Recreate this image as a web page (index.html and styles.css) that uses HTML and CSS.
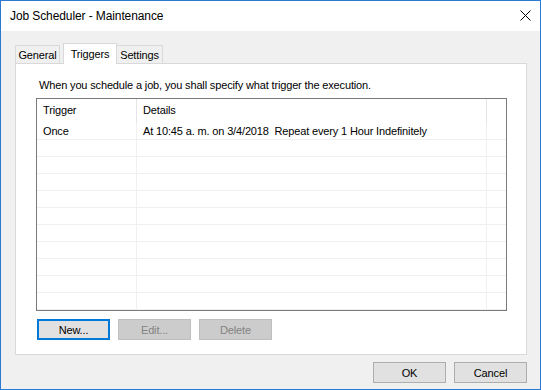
FILE: index.html
```html
<!DOCTYPE html>
<html lang="en">
<head>
  <meta charset="UTF-8" />
  <title>Job Scheduler - Maintenance</title>
  <link rel="stylesheet" href="styles.css">
</head>
<body>
  <div class="window">
    <div class="titlebar">
      <span class="title">Job Scheduler - Maintenance</span>
      <svg class="close" width="11" height="11" viewBox="0 0 11 11">
        <path d="M0.5 0.5 L10.5 10.5 M10.5 0.5 L0.5 10.5" stroke="#000" stroke-width="1" fill="none"/>
      </svg>
    </div>

    <div class="content">
      <div class="tabs">
        <div class="tab tab-general">General</div>
        <div class="tab tab-triggers active">Triggers</div>
        <div class="tab tab-settings">Settings</div>
      </div>

      <div class="panel">
        <div class="desc">When you schedule a job, you shall specify what trigger the execution.</div>

        <div class="list">
          <div class="list-head">
            <div class="hcell">Trigger</div>
            <div class="hcell">Details</div>
            <div class="hcell last"></div>
          </div>
          <div class="list-body" id="rows"></div>
        </div>

        <div class="list-buttons">
          <button class="btn focused">New...</button>
          <button class="btn" disabled>Edit...</button>
          <button class="btn" disabled>Delete</button>
        </div>
      </div>

      <div class="footer">
        <button class="btn">OK</button>
        <button class="btn">Cancel</button>
      </div>
    </div>
  </div>

  <script>
    const rows = [
      ["Once", "At 10:45 a. m. on 3/4/2018  Repeat every 1 Hour Indefinitely"]
    ];
    const body = document.getElementById("rows");
    for (let i = 0; i < 11; i++) {
      const r = rows[i] || ["", ""];
      const row = document.createElement("div");
      row.className = "row";
      [r[0], r[1], ""].forEach(txt => {
        const c = document.createElement("div");
        c.className = "cell";
        c.textContent = txt;
        row.appendChild(c);
      });
      body.appendChild(row);
    }
  </script>
</body>
</html>
```

FILE: styles.css
```css
* {
  box-sizing: border-box;
}

body {
  margin: 0;
  font-family: "Liberation Sans", Arial, sans-serif;
  font-size: 11px;
  letter-spacing: -0.15px;
  color: #000;
  background: #fff;
}

.window {
  width: 541px;
  height: 390px;
  border: 1px solid #2b79d0;
  background: #f0f0f0;
  display: flex;
  flex-direction: column;
}

.titlebar {
  height: 30px;
  background: #fff;
  display: flex;
  align-items: center;
  justify-content: space-between;
  padding: 0 9px 0 9px;
}

.title {
  font-size: 12px;
  letter-spacing: -0.1px;
  padding-bottom: 1px;
}

.close {
  margin-bottom: 1px;
}

.content {
  flex: 1;
  display: flex;
  flex-direction: column;
  padding: 12px 13px 0 14px;
}

.tabs {
  display: flex;
  align-items: flex-end;
  height: 21px;
  margin-bottom: -1px;
  position: relative;
  z-index: 1;
}

.tab {
  height: 18px;
  border: 1px solid #d9d9d9;
  border-bottom: none;
  background: #f0f0f0;
  display: flex;
  align-items: center;
  justify-content: center;
  padding-top: 1px;
  margin-bottom: 1px;
}

.tab-general {
  width: 45px;
}

.tab-triggers {
  width: 54px;
  margin-left: 3px;
}

.tab-settings {
  width: 47px;
  margin-left: -1px;
}

.tab.active {
  height: 21px;
  background: #fff;
  margin-bottom: 0;
  padding-bottom: 2px;
  position: relative;
  z-index: 2;
}

.panel {
  height: 292px;
  border: 1px solid #d9d9d9;
  background: #fff;
  padding: 13px 19px 0 20px;
}

.desc {
  line-height: 16px;
  padding-left: 3px;
}

.list {
  margin-top: 5px;
  height: 213px;
  border: 1px solid #7a7a7a;
  overflow: hidden;
}

.list-head,
.row {
  display: grid;
  grid-template-columns: 100px 350px 1fr;
}

.list-head {
  height: 24px;
}

.hcell {
  border-right: 1px solid #e5e5e5;
  padding-left: 6px;
  line-height: 23px;
}

.hcell.last {
  border-right: none;
}

.row {
  height: 17px;
  border-bottom: 1px solid #f0f0f0;
}

.cell {
  border-right: 1px solid #f0f0f0;
  padding-left: 6px;
  line-height: 16px;
  white-space: pre;
}

.cell:last-child {
  border-right: none;
}

.list-buttons {
  display: flex;
  gap: 8px;
  margin-top: 8px;
  padding-left: 1px;
}

.btn {
  width: 73px;
  height: 21px;
  padding: 0;
  font-family: inherit;
  font-size: 11px;
  letter-spacing: -0.15px;
  color: #000;
  background: #e1e1e1;
  border: 1px solid #adadad;
}

.btn.focused {
  border: 2px solid #0078d7;
}

.btn:disabled {
  background: #cccccc;
  border-color: #bfbfbf;
  color: #838383;
}

.footer {
  display: flex;
  justify-content: flex-end;
  gap: 8px;
  margin-top: 7px;
}
```
